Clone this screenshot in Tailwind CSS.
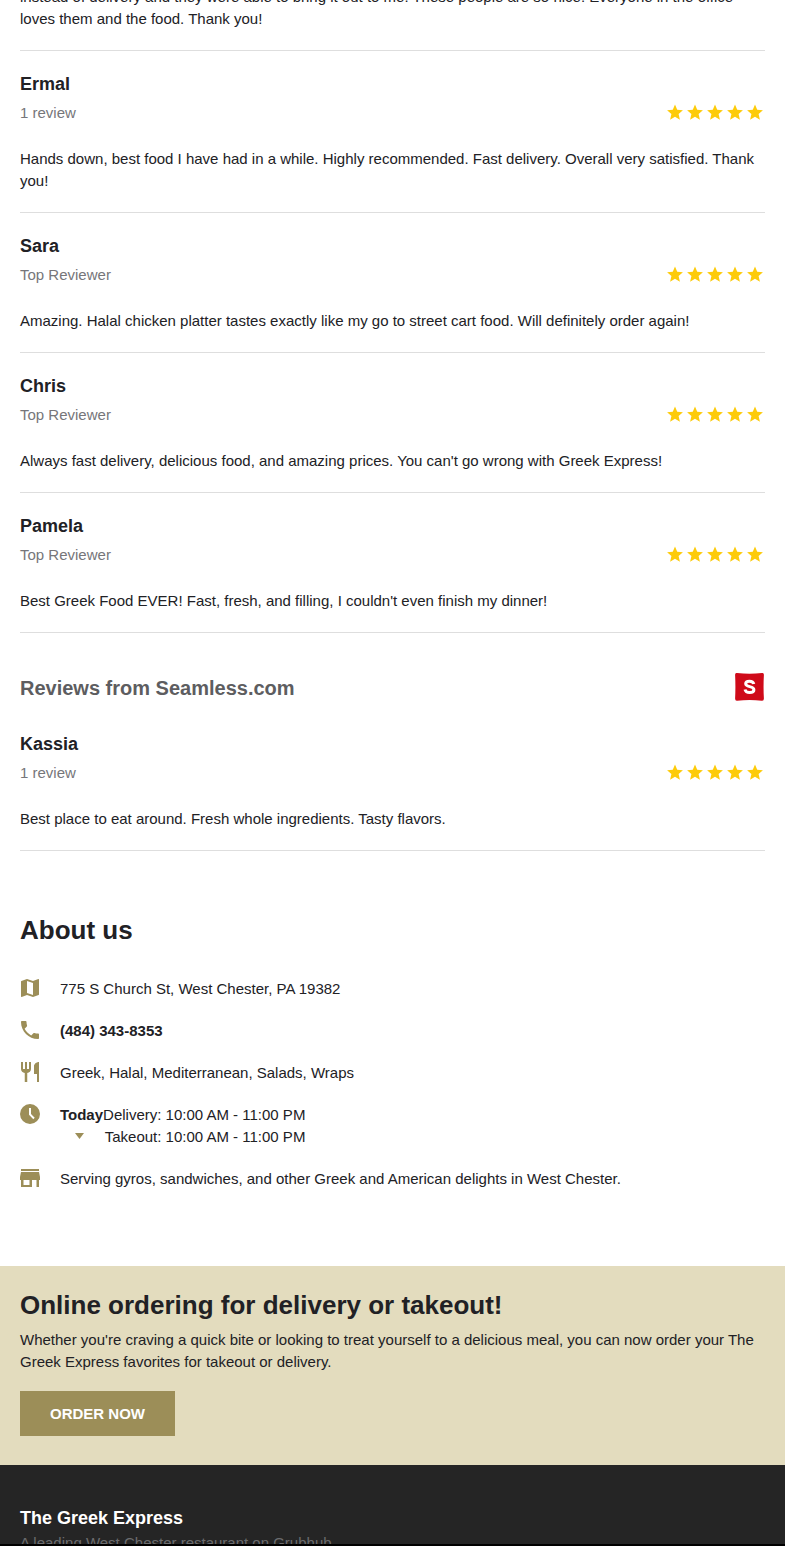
<!DOCTYPE html>
<html lang="en">
<head>
    <meta charset="UTF-8">
    <meta name="viewport" content="width=device-width, initial-scale=1.0">
    <title>The Greek Express | West Chester, PA</title>
    <script src="https://cdn.jsdelivr.net/npm/@tailwindcss/browser@4"></script>
    <style>
        body {
            font-family: "Liberation Sans", Arial, sans-serif;
        }
    </style>
</head>
<body class="flex flex-col h-screen overflow-hidden bg-white text-[#212125] text-[15px] leading-[22px]">
    <!-- shared icons -->
    <svg class="hidden" xmlns="http://www.w3.org/2000/svg">
        <symbol id="star" viewBox="0 0 24 24">
            <path d="M12 17.27L18.18 21l-1.64-7.03L22 9.24l-7.19-.61L12 2 9.19 8.63 2 9.24l5.46 4.73L5.82 21z" />
        </symbol>
        <symbol id="stars" viewBox="0 0 100 20">
            <use href="#star" x="0.5" y="1" width="19" height="19" />
            <use href="#star" x="20.5" y="1" width="19" height="19" />
            <use href="#star" x="40.5" y="1" width="19" height="19" />
            <use href="#star" x="60.5" y="1" width="19" height="19" />
            <use href="#star" x="80.5" y="1" width="19" height="19" />
        </symbol>
    </svg>

    <main class="shrink-0">
        <!-- Reviews -->
        <section class="px-5">
            <article class="-mt-3.5 pb-5 border-b border-[#dedede]">
                <p>instead of delivery and they were able to bring it out to me! These people are so nice! Everyone in the office loves them and the food. Thank you!</p>
            </article>

            <article class="py-5 border-b border-[#dedede]">
                <h3 class="text-lg leading-[26px] font-bold">Ermal</h3>
                <div class="flex justify-between mt-[5px] mb-6">
                    <span class="text-[#76767a]">1 review</span>
                    <svg class="w-[100px] h-5 fill-[#fdcb0a]" role="img" aria-label="5 stars"><use href="#stars" /></svg>
                </div>
                <p>Hands down, best food I have had in a while. Highly recommended. Fast delivery. Overall very satisfied. Thank you!</p>
            </article>

            <article class="py-5 border-b border-[#dedede]">
                <h3 class="text-lg leading-[26px] font-bold">Sara</h3>
                <div class="flex justify-between mt-[5px] mb-6">
                    <span class="text-[#76767a]">Top Reviewer</span>
                    <svg class="w-[100px] h-5 fill-[#fdcb0a]" role="img" aria-label="5 stars"><use href="#stars" /></svg>
                </div>
                <p>Amazing. Halal chicken platter tastes exactly like my go to street cart food. Will definitely order again!</p>
            </article>

            <article class="py-5 border-b border-[#dedede]">
                <h3 class="text-lg leading-[26px] font-bold">Chris</h3>
                <div class="flex justify-between mt-[5px] mb-6">
                    <span class="text-[#76767a]">Top Reviewer</span>
                    <svg class="w-[100px] h-5 fill-[#fdcb0a]" role="img" aria-label="5 stars"><use href="#stars" /></svg>
                </div>
                <p>Always fast delivery, delicious food, and amazing prices. You can't go wrong with Greek Express!</p>
            </article>

            <article class="py-5 border-b border-[#dedede]">
                <h3 class="text-lg leading-[26px] font-bold">Pamela</h3>
                <div class="flex justify-between mt-[5px] mb-6">
                    <span class="text-[#76767a]">Top Reviewer</span>
                    <svg class="w-[100px] h-5 fill-[#fdcb0a]" role="img" aria-label="5 stars"><use href="#stars" /></svg>
                </div>
                <p>Best Greek Food EVER! Fast, fresh, and filling, I couldn't even finish my dinner!</p>
            </article>

            <div class="flex items-center justify-between pt-10 pb-2">
                <h2 class="text-xl leading-[30px] font-bold text-[#5d5d60]">Reviews from Seamless.com</h2>
                <svg class="w-[30px] h-[30px]" viewBox="0.5 1 30 30" fill="none" role="img" aria-label="Seamless">
                    <path d="M2.500 1Q15 2.600 27.500 1Q29.400 .8 29.400 2.800Q28.700 15 29.400 26.500Q29.400 29 27.300 28.700Q15 27.400 2.700 28.700Q.6 29 .6 26.500Q1.200 15 .6 2.800Q.6 .8 2.500 1Z" fill="#cf0a19" />
                    <path d="M19.300 12C18.800 9.900 17.200 9.200 15 9.200C12.600 9.200 11.200 10.100 11.200 11.800C11.200 15.600 19.400 13.600 19.400 17.700C19.400 19.800 17.500 20.600 15.100 20.600C12.500 20.600 11 19.600 10.500 17.500" stroke="#fff" stroke-width="3" />
                </svg>
            </div>

            <article class="py-5 border-b border-[#dedede]">
                <h3 class="text-lg leading-[26px] font-bold">Kassia</h3>
                <div class="flex justify-between mt-[5px] mb-6">
                    <span class="text-[#76767a]">1 review</span>
                    <svg class="w-[100px] h-5 fill-[#fdcb0a]" role="img" aria-label="5 stars"><use href="#stars" /></svg>
                </div>
                <p>Best place to eat around. Fresh whole ingredients. Tasty flavors.</p>
            </article>
        </section>

        <!-- About us -->
        <section class="px-5 pt-[61px] pb-[76px]">
            <h2 class="text-[26px] leading-9 font-bold mb-[30px]">About us</h2>
            <ul class="flex flex-col gap-5">
                <li class="flex gap-5">
                    <svg class="w-5 h-5 shrink-0 fill-[#9c8e58]" viewBox="2 2 20 20">
                        <path d="M20.500 3l-.16.03L15 5.100 9 3 3.360 4.900c-.21.07-.36.25-.36.480V20.500c0 .28.22.5.5.5l.16-.03L9 18.900l6 2.100 5.640-1.900c.21-.07.36-.25.36-.48V3.500c0-.28-.22-.5-.5-.5zM15 19l-6-2.110V5l6 2.110V19z" />
                    </svg>
                    <span>775 S Church St, West Chester, PA 19382</span>
                </li>
                <li class="flex gap-5">
                    <svg class="w-5 h-5 shrink-0 fill-[#9c8e58]" viewBox="2 2 20 20">
                        <path d="M6.620 10.790c1.440 2.830 3.760 5.140 6.590 6.590l2.200-2.200c.27-.27.67-.36 1.020-.24 1.120.37 2.330.57 3.570.57.55 0 1 .45 1 1V20c0 .55-.45 1-1 1-9.390 0-17-7.610-17-17 0-.55.45-1 1-1h3.500c.55 0 1 .45 1 1 0 1.250.2 2.450.57 3.570.11.35.03.74-.25 1.020l-2.200 2.200z" />
                    </svg>
                    <a href="tel:4843438353" class="font-bold">(484) 343-8353</a>
                </li>
                <li class="flex gap-5">
                    <svg class="w-5 h-5 shrink-0 fill-[#9c8e58]" viewBox="2 2 20 20">
                        <path d="M11 9H9V2H7v7H5V2H3v7c0 2.120 1.660 3.840 3.750 3.970V22h2.500v-9.030C11.340 12.840 13 11.120 13 9V2h-2v7zm5-3v8h3v8h2V2c-2.760 0-5 2.240-5 4z" />
                    </svg>
                    <span>Greek, Halal, Mediterranean, Salads, Wraps</span>
                </li>
                <li class="flex gap-5">
                    <svg class="w-5 h-5 shrink-0 fill-[#9c8e58]" viewBox="2 2 20 20">
                        <path fill-rule="evenodd" d="M12 2a10 10 0 100 20 10 10 0 000-20zM11 6h2v6l3.700 3.800-1.400 1.400L11 12.800z" />
                    </svg>
                    <div class="flex">
                        <button type="button" class="flex flex-col items-center font-bold" aria-label="Today, show all hours">
                            Today
                            <svg class="w-[9px] h-[22px] mr-1 fill-[#9c8e58]" viewBox="0 0 9 22"><path d="M0 7h9l-4.500 6z" /></svg>
                        </button>
                        <div class="text-right">
                            <p>Delivery: 10:00 AM - 11:00 PM</p>
                            <p>Takeout: 10:00 AM - 11:00 PM</p>
                        </div>
                    </div>
                </li>
                <li class="flex gap-5">
                    <svg class="w-5 h-5 shrink-0 fill-[#9c8e58]" viewBox="0 0 20 20">
                        <path fill-rule="evenodd" d="M1 1h18v2H1zM1 4h18l1 5v3h-1v7h-2.500v-7H12v7H1v-7H0V9zM3.500 12v5h6v-5z" />
                    </svg>
                    <span>Serving gyros, sandwiches, and other Greek and American delights in West Chester.</span>
                </li>
            </ul>
        </section>

        <!-- Order banner -->
        <section class="bg-[#e3dcbe] px-5 pt-[22px] pb-[29px]">
            <h2 class="text-[26px] leading-[34px] font-bold mb-[7px]">Online ordering for delivery or takeout!</h2>
            <p class="mb-[18px]">Whether you're craving a quick bite or looking to treat yourself to a delicious meal, you can now order your The Greek Express favorites for takeout or delivery.</p>
            <button type="button" class="block h-[45px] px-[30px] bg-[#9c8e58] text-white font-bold">ORDER NOW</button>
        </section>
    </main>

    <footer class="flex-1 min-h-0 overflow-hidden bg-[#252525] border-b-2 border-black px-5 pt-10">
        <h2 class="text-lg leading-[26px] font-bold text-white">The Greek Express</h2>
        <p class="leading-6 text-[#6c6c6e]">A leading West Chester restaurant on Grubhub</p>
    </footer>
</body>
</html>
